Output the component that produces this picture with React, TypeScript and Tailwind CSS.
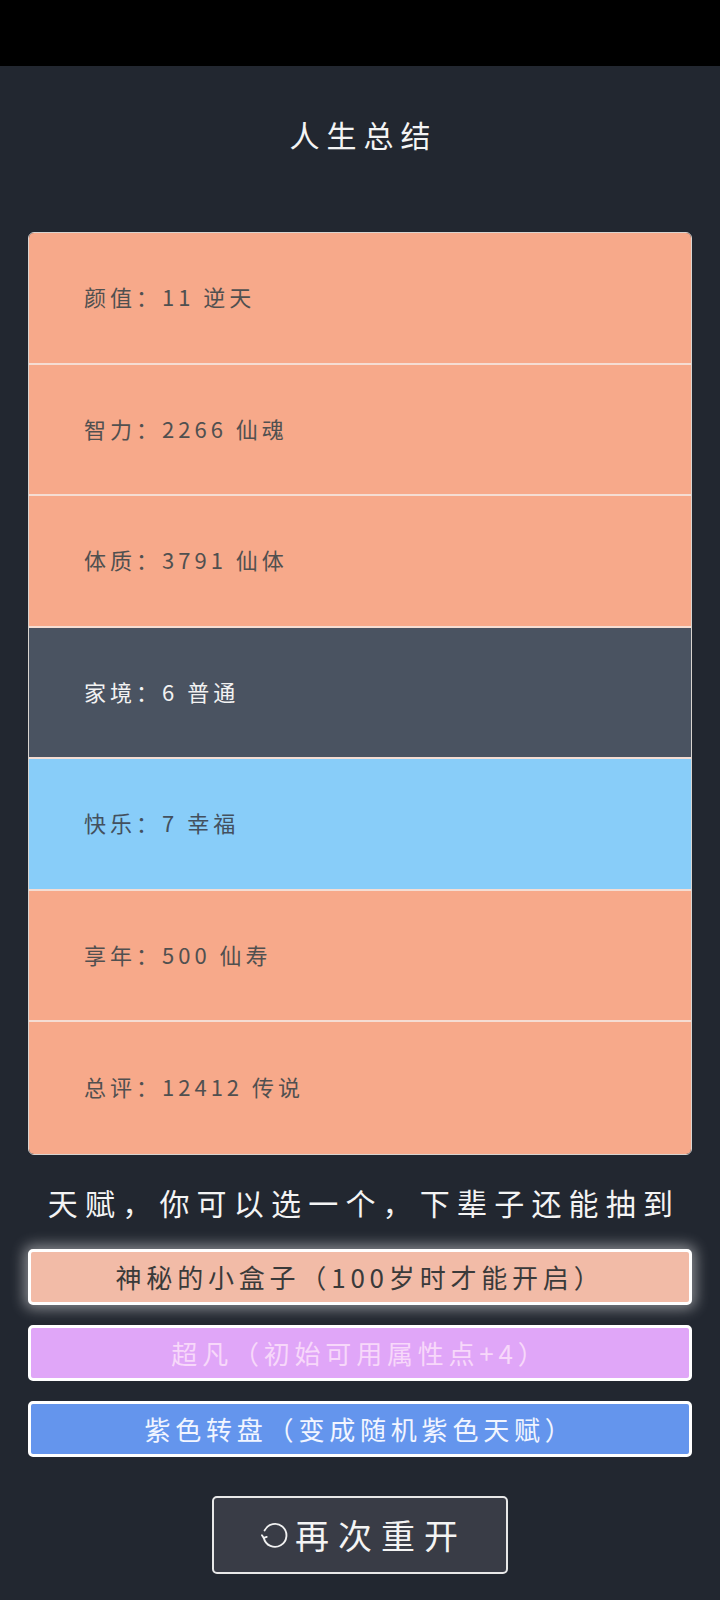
import React from "react";

const rows: { label: string; bg: string; text: string }[] = [
  { label: "颜值：11 逆天", bg: "bg-[#f7a98a]", text: "text-[#505050]" },
  { label: "智力：2266 仙魂", bg: "bg-[#f7a98a]", text: "text-[#505050]" },
  { label: "体质：3791 仙体", bg: "bg-[#f7a98a]", text: "text-[#505050]" },
  { label: "家境：6 普通", bg: "bg-[#4a5361]", text: "text-[#f2f2f2]" },
  { label: "快乐：7 幸福", bg: "bg-[#88cdf9]", text: "text-[#43505e]" },
  { label: "享年：500 仙寿", bg: "bg-[#f7a98a]", text: "text-[#505050]" },
  { label: "总评：12412 传说", bg: "bg-[#f7a98a]", text: "text-[#505050]" },
];

function RestartIcon() {
  return (
    <svg width="32" height="32" viewBox="0 0 24 24" fill="none" stroke="#f2f2f2" strokeWidth="1.4" strokeLinecap="round" strokeLinejoin="round">
      <path d="M3.6 14.2 A8.6 8.6 0 1 0 4.2 8.6" />
      <path d="M3.6 14.2 L2.2 12.2" />
      <path d="M3.6 14.2 L5.8 13.4" />
    </svg>
  );
}

export default function App() {
  return (
    <div
      className="w-[720px] min-h-[1600px] bg-[#222730] flex flex-col"
      style={{ fontFamily: '"Noto Sans CJK SC", "Noto Sans", sans-serif' }}
    >
      <div className="h-[66px] bg-black shrink-0" />
      <div className="pt-[48px] pl-[7px] text-center text-[30px] leading-[40px] tracking-[7px] text-[#f4f4f4]">
        人生总结
      </div>
      <div className="mx-[28px] mt-[78px] rounded-[6px] border border-[#d9d4d0] overflow-hidden">
        {rows.map((r, i) => (
          <div
            key={i}
            className={`${r.bg} ${r.text} h-[131.5px] flex items-center pl-[55px] pb-[2px] text-[22px] tracking-[4px] whitespace-pre ${
              i < rows.length - 1 ? "border-b-2 border-[#f5ddd3]" : ""
            }`}
          >
            {r.label}
          </div>
        ))}
      </div>
      <div className="mt-[27px] pl-[8px] text-center text-[30px] leading-[40px] tracking-[7.2px] text-[#f4f4f4]">
        天赋，你可以选一个，下辈子还能抽到
      </div>
      <div className="mx-[28px] mt-[27px] flex flex-col gap-[20px]">
        <div className="h-[56px] rounded-[5px] border-[3px] border-white bg-[#f2bba7] flex items-center justify-center text-[26px] tracking-[4.8px] text-[#3a3a3a] shadow-[0_0_14px_4px_rgba(255,255,255,0.45)]">
          神秘的小盒子（100岁时才能开启）
        </div>
        <div className="h-[56px] rounded-[5px] border-[3px] border-white bg-[#e0a6f8] flex items-center justify-center text-[26px] tracking-[4.8px] text-[#f7d8fa]">
          超凡（初始可用属性点+4）
        </div>
        <div className="h-[56px] rounded-[5px] border-[3px] border-white bg-[#6495ed] flex items-center justify-center text-[26px] tracking-[4.8px] text-[#f2f5ff]">
          紫色转盘（变成随机紫色天赋）
        </div>
      </div>
      <div className="mt-[39px] flex justify-center">
        <div className="w-[296px] h-[78px] rounded-[5px] border-2 border-[#e8e8e8] bg-[#393c46] flex items-center justify-center gap-[4px] pl-[6px] text-[34px] tracking-[9px] text-[#f4f4f4]">
          <RestartIcon />
          <span>再次重开</span>
        </div>
      </div>
    </div>
  );
}
